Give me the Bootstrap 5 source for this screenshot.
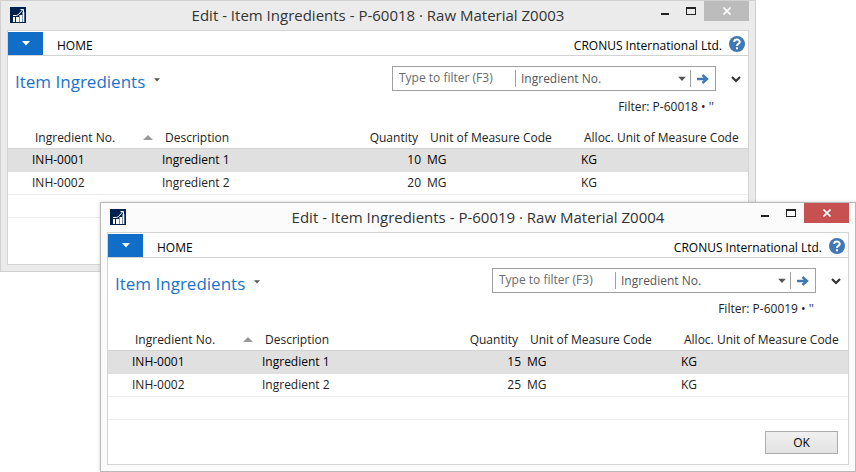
<!DOCTYPE html>
<html lang="en">
<head>
<meta charset="utf-8">
<meta name="viewport" content="width=device-width, initial-scale=1">
<title>Item Ingredients</title>
<link href="https://cdn.jsdelivr.net/npm/bootstrap@5.3.0/dist/css/bootstrap.min.css" rel="stylesheet">
<style>
  body { font-family: "Open Sans", "Noto Sans", sans-serif; font-size: 12px; line-height: 16px; color: #222; background: #fff; }
  .desktop { min-height: 100vh; }
  button { font: inherit; color: inherit; background: none; border: 0; padding: 0; }
  svg { display: block; }

  /* windows overlap freely on the desktop */
  .win { position: absolute; width: calc(100% - 100px); padding: 0 6px 6px; border: 1px solid #d0d0d0; background: #ebebeb; }
  .win-back { left: 0; top: 0; }
  .win-front { left: 100px; top: 202px; border-color: #b9b9b9; background: #fbfbfb; box-shadow: 0 0 3px rgba(0,0,0,.2); }

  .titlebar { display: grid; grid-template-columns: 1fr auto 1fr; height: 29px; }
  .titlebar h1 { font-size: 15px; line-height: 29px; margin: 0; font-weight: 400; color: #333; white-space: nowrap; }
  .app-logo { margin: 6px 0 0 3px; }
  .win-btn { width: 26px; height: 20px; display: flex; align-items: center; justify-content: center; }
  .win-close { width: 45px; background: #bcbcbc; }
  .win-front .win-close { background: #c75050; }

  .panel { border: 1px solid #d3d3d3; background: #fff; }
  .ribbon { height: 25px; padding-top: 1px; border-bottom: 1px solid #d3d3d3; color: #000; }
  .app-menu { width: 35px; height: 23px; background: #106ec8; }
  .ribbon-tab { color: #000; text-decoration: none; margin-left: 14px; padding-top: 6px; }
  .company { padding-top: 6px; }
  .help-btn { margin: 4px 3px 0 7px; }

  .page-head { padding: 10px 7px 0; height: 35px; }
  .page-head h2 { font-size: 17px; line-height: 24px; margin: 4px 0 0; font-weight: 400; color: #1a73cc; }
  .views-btn { margin: 8px 0 0 5px; padding: 4px; color: #555; }
  .filter-box { width: 324px; height: 25px; border: 1px solid #a0a0a0; color: #555; }
  .filter-box input { width: 122px; border: 0; padding: 0 0 2px 6px; outline: 0; color: #555; background: none; }
  .filter-box input::placeholder { color: #6a6a6a; opacity: 1; }
  .filter-box select { appearance: none; border: 0; padding: 0 5px; width: 100%; color: #555; background: none; }
  .divider { width: 1px; height: 17px; background: #a0a0a0; }
  .go-btn { padding: 0 6px; }
  .expand-btn { margin: 10px 0 0 15px; }
  .filter-note { padding: 8px 34px 0 0; height: 36px; }

  .grid { width: 100%; table-layout: fixed; border-collapse: separate; border-spacing: 0; white-space: nowrap; }
  .grid th { font-weight: 400; height: 22px; padding: 0 6px; border-bottom: 1px solid #d3d3d3; }
  .grid td { height: 23px; padding: 0 3px; border-bottom: 1px solid #ededed; }
  .grid th:first-child { padding-left: 27px; }
  .grid td:first-child { padding-left: 24px; }
  .grid .picked td { background: #e0e0e0; border-color: #e0e0e0; color: #000; }
  .c-no { width: 151px; } .c-qty { width: 92px; } .c-unit { width: 154px; } .c-alloc { width: 170px; }

  .foot { min-height: 46px; }
  .foot-actions { padding: 11px 10px 10px; }
  .ok-btn { width: 73px; height: 23px; border: 1px solid #acacac; background: linear-gradient(#f0f0f0, #e3e3e3); color: #000; }
</style>
<script src="https://cdn.jsdelivr.net/npm/bootstrap@5.3.0/dist/js/bootstrap.bundle.min.js"></script>
</head>
<body>
<svg width="0" height="0" class="position-absolute" aria-hidden="true">
  <symbol id="logo" viewBox="0 0 16 16">
    <path fill="#00204d" d="M0 0h16v16H0z"/>
    <path fill="#fff" d="M3 10h2v5H3zM6 10h3v5H6zM9.500 8H12v7H9.500zM12.500 5h1.800v10h-1.800z"/>
    <path fill="none" stroke="#fff" d="M3 8.500h3.500L8.500 7.500l4-4.500M10.500 2.500h3V5"/>
  </symbol>
  <symbol id="min" viewBox="0 0 8 8"><path fill="#222" d="M0 6h8v2H0z"/></symbol>
  <symbol id="max" viewBox="0 0 10 8"><path fill="#222" fill-rule="evenodd" d="M0 0h10v8H0zM1 2v5h8V2z"/></symbol>
  <symbol id="close" viewBox="0 0 8 8"><path fill="none" stroke="#fff" stroke-width="1.600" d="M.5.5l7 7M7.500.5l-7 7"/></symbol>
  <symbol id="down" viewBox="0 0 8 5"><path fill="currentColor" d="M0 0h8L4 4.500z"/></symbol>
  <symbol id="up" viewBox="0 0 10 5"><path fill="#9a9a9a" d="M0 5h10L5 0z"/></symbol>
  <symbol id="go" viewBox="0 0 12 10"><path fill="none" stroke="#3f78b5" stroke-width="2.400" d="M0 5h10M5.500 1l4.500 4-4.500 4"/></symbol>
  <symbol id="chev" viewBox="0 0 10 7"><path fill="none" stroke="#333" stroke-width="2.200" d="M1 1l4 4 4-4"/></symbol>
  <symbol id="help" viewBox="0 0 16 16">
    <circle cx="8" cy="8" r="8" fill="#3f78b5"/>
    <path fill="none" stroke="#fff" stroke-width="2" d="M5.200 6c0-3.200 5.600-3.200 5.600 0C10.800 7.800 8 7.600 8 10"/>
    <path fill="#fff" d="M7 11.300h2v2H7z"/>
  </symbol>
</svg>

<main class="desktop position-relative">
  <section class="win win-back" aria-labelledby="t1">
    <header class="titlebar">
      <svg class="app-logo" width="16" height="16"><use href="#logo"/></svg>
      <h1 id="t1">Edit - Item Ingredients - P-60018 · Raw Material Z0003</h1>
      <div class="d-flex justify-content-end">
        <button class="win-btn" aria-label="Minimize"><svg width="8" height="8"><use href="#min"/></svg></button>
        <button class="win-btn" aria-label="Maximize"><svg width="10" height="8"><use href="#max"/></svg></button>
        <button class="win-btn win-close" aria-label="Close"><svg width="8" height="8"><use href="#close"/></svg></button>
      </div>
    </header>
    <div class="panel">
      <nav class="ribbon d-flex align-items-start">
        <button class="app-menu text-white d-flex align-items-center justify-content-center" aria-label="Application menu"><svg width="8" height="5"><use href="#down"/></svg></button>
        <a class="ribbon-tab" href="#">HOME</a>
        <span class="company ms-auto">CRONUS International Ltd.</span>
        <button class="help-btn" aria-label="Help"><svg width="16" height="16"><use href="#help"/></svg></button>
      </nav>
      <div class="page-head d-flex align-items-start">
        <h2>Item Ingredients</h2>
        <button class="views-btn" aria-label="Page views"><svg width="6" height="4"><use href="#down"/></svg></button>
        <div class="filter-box d-flex align-items-center ms-auto">
          <input type="text" placeholder="Type to filter (F3)" aria-label="Type to filter">
          <span class="divider"></span>
          <div class="position-relative flex-fill">
            <select aria-label="Filter column"><option>Ingredient No.</option></select>
            <svg class="position-absolute top-50 end-0 translate-middle-y me-1 pe-none" width="8" height="5"><use href="#down"/></svg>
          </div>
          <span class="divider"></span>
          <button class="go-btn" aria-label="Apply filter"><svg width="12" height="10"><use href="#go"/></svg></button>
        </div>
        <button class="expand-btn" aria-label="Expand filter"><svg width="10" height="7"><use href="#chev"/></svg></button>
      </div>
      <div class="filter-note text-end">Filter: P-60018 • ''</div>
      <table class="grid">
        <colgroup><col class="c-no"><col><col class="c-qty"><col class="c-unit"><col class="c-alloc"></colgroup>
        <thead><tr>
          <th><div class="d-flex align-items-center justify-content-between">Ingredient No.<svg width="10" height="5"><use href="#up"/></svg></div></th>
          <th>Description</th><th class="text-end">Quantity</th><th>Unit of Measure Code</th><th>Alloc. Unit of Measure Code</th>
        </tr></thead>
        <tbody>
          <tr class="picked"><td>INH-0001</td><td>Ingredient 1</td><td class="text-end">10</td><td>MG</td><td>KG</td></tr>
          <tr><td>INH-0002</td><td>Ingredient 2</td><td class="text-end">20</td><td>MG</td><td>KG</td></tr>
          <tr><td></td><td></td><td></td><td></td><td></td></tr>
        </tbody>
      </table>
      <div class="foot"></div>
    </div>
  </section>

  <section class="win win-front" aria-labelledby="t2">
    <header class="titlebar">
      <svg class="app-logo" width="16" height="16"><use href="#logo"/></svg>
      <h1 id="t2">Edit - Item Ingredients - P-60019 · Raw Material Z0004</h1>
      <div class="d-flex justify-content-end">
        <button class="win-btn" aria-label="Minimize"><svg width="8" height="8"><use href="#min"/></svg></button>
        <button class="win-btn" aria-label="Maximize"><svg width="10" height="8"><use href="#max"/></svg></button>
        <button class="win-btn win-close" aria-label="Close"><svg width="8" height="8"><use href="#close"/></svg></button>
      </div>
    </header>
    <div class="panel">
      <nav class="ribbon d-flex align-items-start">
        <button class="app-menu text-white d-flex align-items-center justify-content-center" aria-label="Application menu"><svg width="8" height="5"><use href="#down"/></svg></button>
        <a class="ribbon-tab" href="#">HOME</a>
        <span class="company ms-auto">CRONUS International Ltd.</span>
        <button class="help-btn" aria-label="Help"><svg width="16" height="16"><use href="#help"/></svg></button>
      </nav>
      <div class="page-head d-flex align-items-start">
        <h2>Item Ingredients</h2>
        <button class="views-btn" aria-label="Page views"><svg width="6" height="4"><use href="#down"/></svg></button>
        <div class="filter-box d-flex align-items-center ms-auto">
          <input type="text" placeholder="Type to filter (F3)" aria-label="Type to filter">
          <span class="divider"></span>
          <div class="position-relative flex-fill">
            <select aria-label="Filter column"><option>Ingredient No.</option></select>
            <svg class="position-absolute top-50 end-0 translate-middle-y me-1 pe-none" width="8" height="5"><use href="#down"/></svg>
          </div>
          <span class="divider"></span>
          <button class="go-btn" aria-label="Apply filter"><svg width="12" height="10"><use href="#go"/></svg></button>
        </div>
        <button class="expand-btn" aria-label="Expand filter"><svg width="10" height="7"><use href="#chev"/></svg></button>
      </div>
      <div class="filter-note text-end">Filter: P-60019 • ''</div>
      <table class="grid">
        <colgroup><col class="c-no"><col><col class="c-qty"><col class="c-unit"><col class="c-alloc"></colgroup>
        <thead><tr>
          <th><div class="d-flex align-items-center justify-content-between">Ingredient No.<svg width="10" height="5"><use href="#up"/></svg></div></th>
          <th>Description</th><th class="text-end">Quantity</th><th>Unit of Measure Code</th><th>Alloc. Unit of Measure Code</th>
        </tr></thead>
        <tbody>
          <tr class="picked"><td>INH-0001</td><td>Ingredient 1</td><td class="text-end">15</td><td>MG</td><td>KG</td></tr>
          <tr><td>INH-0002</td><td>Ingredient 2</td><td class="text-end">25</td><td>MG</td><td>KG</td></tr>
          <tr><td></td><td></td><td></td><td></td><td></td></tr>
        </tbody>
      </table>
      <div class="foot-actions d-flex justify-content-end"><button class="ok-btn">OK</button></div>
    </div>
  </section>
</main>
</body>
</html>
